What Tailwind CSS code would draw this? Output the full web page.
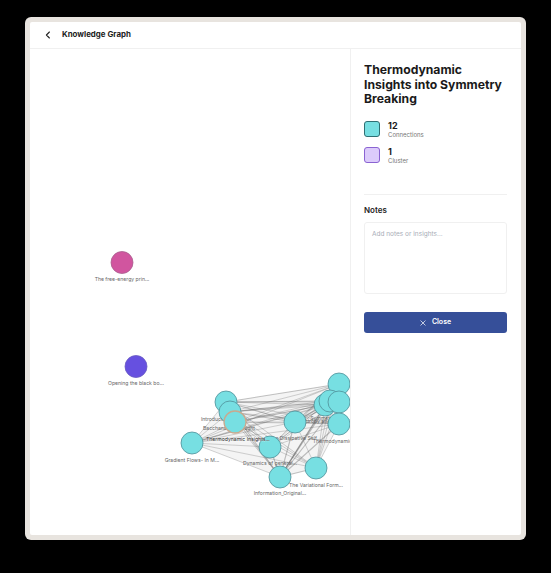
<!doctype html>
<html lang="en">
  <head>
    <meta charset="UTF-8" />
    <meta name="viewport" content="width=device-width, initial-scale=1.0" />
    <title>Knowledge Graph</title>
    <script src="https://cdn.jsdelivr.net/npm/@tailwindcss/browser@4"></script>
  </head>
  <body class="bg-black w-[551px] h-[573px] overflow-hidden font-['Inter',sans-serif]">
    <div class="pt-[17px] pl-[25px]">
      <div class="w-[501px] h-[523px] p-[5px] rounded-[6px] bg-[#e8e4df]">
        <div class="w-full h-full bg-white rounded-[2px] flex flex-col overflow-hidden">
          <!-- Header -->
          <div class="h-[27px] shrink-0 flex items-center gap-[10px] pl-[14px] border-b border-[#f0f0f0]">
            <svg class="w-[8px] h-[8px] text-[#222]" viewBox="0 0 8 8" fill="none" stroke="currentColor" stroke-width="1.1" stroke-linecap="round" stroke-linejoin="round">
              <path d="M5.4 1 L2.4 4 L5.4 7" />
            </svg>
            <span class="text-[7.9px] font-bold text-[#1c1c1c]">Knowledge Graph</span>
          </div>

          <div class="flex-1 flex min-h-0">
            <!-- Graph canvas -->
            <div class="w-[320px] shrink-0 overflow-hidden">
              <svg id="graph" width="320" height="486" viewBox="30 49 320 486" class="block">
                <polygon points="339,384 226,402 192,443 280,477 316,468 339,424" fill="#888" fill-opacity="0.09" />
                <g id="edges"></g>
                <g stroke-width="0.8">
                  <circle cx="122" cy="262.5" r="11" fill="#d1559f" stroke="#a8608e" />
                  <circle cx="136" cy="366.5" r="11" fill="#6650e0" stroke="#6a5cc0" />
                </g>
                <g font-size="5.1" fill="#666" text-anchor="middle">
                  <text x="122" y="281">The free-energy prin...</text>
                  <text x="136" y="385">Opening the black bo...</text>
                  <text x="226" y="421">Introduction to ther...</text>
                  <text x="229" y="430">Bacchanalian thought</text>
                  <text x="192" y="462">Gradient Flows- In M...</text>
                  <text x="270" y="465">Dynamics of general...</text>
                  <text x="295" y="440">The Dissipative Self...</text>
                  <text x="336" y="443">Thermodynamics...</text>
                  <text x="325" y="423">Entropy and order...</text>
                  <text x="330" y="420">Symmetry and...</text>
                  <text x="316" y="487">The Variational Form...</text>
                  <text x="280" y="495">Information_Original...</text>
                </g>
                <g id="nodes" fill="#77dfe2" stroke="#4f8f98" stroke-width="0.8"></g>
                <text x="206" y="441" font-size="5.1" fill="#222" stroke="#fff" stroke-width="0.3" paint-order="stroke">Thermodynamic Insights...</text>
              </svg>
            </div>

            <!-- Side panel -->
            <div class="flex-1 border-l border-[#f0f0f0] pl-[13px] pr-[14px] pt-[14px]">
              <h2 class="text-[12.2px] leading-[14.5px] font-bold text-[#1a1a1a]">Thermodynamic Insights into Symmetry Breaking</h2>

              <div class="mt-[14.5px] flex items-start gap-[8px]">
                <div class="w-[16px] h-[16px] rounded-[3px] bg-[#77dfe2] border border-[#2f6f73]"></div>
                <div>
                  <div class="text-[9px] leading-[10px] font-bold text-[#1a1a1a]">12</div>
                  <div class="text-[6px] leading-[8px] text-[#777]">Connections</div>
                </div>
              </div>
              <div class="mt-[8px] flex items-start gap-[8px]">
                <div class="w-[16px] h-[16px] rounded-[3px] bg-[#dccbfb] border border-[#8a63d2]"></div>
                <div>
                  <div class="text-[9px] leading-[10px] font-bold text-[#1a1a1a]">1</div>
                  <div class="text-[6px] leading-[8px] text-[#777]">Cluster</div>
                </div>
              </div>

              <div class="mt-[29px] border-t border-[#f0f0f0]"></div>

              <div class="mt-[10px] text-[8px] leading-[10px] font-semibold text-[#222]">Notes</div>
              <textarea class="mt-[7px] block w-[143px] h-[72px] resize-none rounded-[3px] border border-[#f0f0f0] px-[7px] py-[7px] text-[6.5px] leading-[9px] placeholder:text-[#a8adb7]" placeholder="Add notes or insights..."></textarea>

              <button class="mt-[18px] w-[143px] h-[21px] rounded-[3px] bg-[#364f99] text-white flex items-center justify-center gap-[6px] text-[7px] font-semibold">
                <svg class="w-[6px] h-[6px]" viewBox="0 0 6 6" fill="none" stroke="currentColor" stroke-width="0.7" stroke-linecap="round">
                  <path d="M0.8 0.8 L5.2 5.2 M5.2 0.8 L0.8 5.2" />
                </svg>
                Close
              </button>
            </div>
          </div>
        </div>
      </div>
    </div>

    <script>
      // cyan cluster, drawn back to front
      const cluster = [
        [339, 384], [226, 402], [230, 412], [325, 405], [330, 401], [339, 402],
        [339, 424], [295, 422], [270, 447], [316, 468], [280, 477], [192, 443], [235, 422],
      ];
      const ns = "http://www.w3.org/2000/svg";
      const edges = document.getElementById("edges");
      const nodes = document.getElementById("nodes");
      cluster.forEach((a, i) => {
        cluster.slice(i + 1).forEach((b, j) => {
          const line = document.createElementNS(ns, "line");
          line.setAttribute("x1", a[0]);
          line.setAttribute("y1", a[1]);
          line.setAttribute("x2", b[0]);
          line.setAttribute("y2", b[1]);
          line.setAttribute("stroke", "#555");
          line.setAttribute("stroke-opacity", "0.36");
          line.setAttribute("stroke-width", (i + j) % 3 === 0 ? "1.1" : "0.7");
          edges.appendChild(line);
        });
      });
      cluster.forEach((p, i) => {
        const c = document.createElementNS(ns, "circle");
        c.setAttribute("cx", p[0]);
        c.setAttribute("cy", p[1]);
        c.setAttribute("r", "11");
        if (i === cluster.length - 1) {
          c.setAttribute("stroke", "#c9a98f");
          c.setAttribute("stroke-width", "1.3");
        }
        nodes.appendChild(c);
      });
    </script>
  </body>
</html>
